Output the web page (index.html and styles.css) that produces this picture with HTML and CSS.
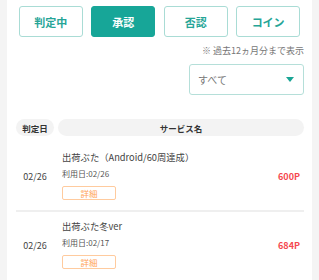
FILE: index.html
```html
<!DOCTYPE html>
<html lang="ja">
<head>
<meta charset="utf-8">
<link rel="stylesheet" href="styles.css">
</head>
<body>
<div class="page">
  <div class="tabs">
    <div class="tab">判定中</div>
    <div class="tab active">承認</div>
    <div class="tab">否認</div>
    <div class="tab">コイン</div>
  </div>
  <div class="note">※ 過去12ヵ月分まで表示</div>
  <div class="filter-row">
    <div class="select">
      <span class="select-text">すべて</span>
      <span class="caret"></span>
    </div>
  </div>
  <div class="thead">
    <div class="th th-date">判定日</div>
    <div class="th th-name">サービス名</div>
  </div>
  <div class="row">
    <div class="date">02/26</div>
    <div class="info">
      <div class="title">出荷ぶた（Android/60周達成）</div>
      <div class="used">利用日:02/26</div>
      <div class="detail">詳細</div>
    </div>
    <div class="points">600P</div>
  </div>
  <div class="row">
    <div class="date">02/26</div>
    <div class="info">
      <div class="title">出荷ぶた冬ver</div>
      <div class="used">利用日:02/17</div>
      <div class="detail">詳細</div>
    </div>
    <div class="points">684P</div>
  </div>
</div>
</body>
</html>
```
FILE: styles.css
```css
html, body {
  margin: 0;
  padding: 0;
  background: #f4f4f4;
  font-family: "Noto Sans CJK JP", "Noto Sans", sans-serif;
}
.page {
  margin: 0 7px;
  width: 305px;
  height: 280px;
  background: #fff;
  padding: 6px 8px 0 9px;
  box-sizing: border-box;
  overflow: hidden;
}
.tabs {
  display: grid;
  grid-template-columns: repeat(4, 1fr);
  column-gap: 8.7px;
  margin: 0 4px 0 3px;
}
.tab {
  height: 31px;
  box-sizing: border-box;
  border: 1px solid #a9dcd5;
  border-radius: 3px;
  display: flex;
  align-items: center;
  justify-content: center;
  color: #26a597;
  font-size: 11px;
  font-weight: 700;
}
.tab.active {
  background: #17a698;
  border-color: #17a698;
  color: #fff;
}
.note {
  margin-top: 8px;
  text-align: right;
  font-size: 9px;
  line-height: 12px;
  color: #777;
}
.filter-row {
  display: flex;
  justify-content: flex-end;
  margin-top: 7px;
}
.select {
  width: 115px;
  height: 31px;
  box-sizing: border-box;
  border: 1px solid #b5dfd9;
  border-radius: 3px;
  display: flex;
  align-items: center;
  justify-content: space-between;
  padding: 0 9px 0 8px;
}
.select-text {
  font-size: 10px;
  color: #777;
}
.caret {
  width: 0;
  height: 0;
  border-left: 4.5px solid transparent;
  border-right: 4.5px solid transparent;
  border-top: 5px solid #1aa595;
}
.thead {
  display: flex;
  gap: 4px;
  margin-top: 24px;
  margin-bottom: 7px;
}
.th {
  height: 17px;
  border-radius: 9px;
  background: #f3f3f3;
  display: flex;
  align-items: center;
  justify-content: center;
  font-size: 8.5px;
  font-weight: 700;
  color: #333;
}
.th-date {
  width: 38px;
}
.th-name {
  flex: 1;
}
.row {
  display: flex;
  align-items: center;
  padding: 7px 4px 10px 0;
}
.row + .row {
  border-top: 2px solid #efefef;
}
.date {
  width: 38px;
  text-align: center;
  font-size: 9px;
  color: #444;
  margin-right: 8px;
  padding-top: 2px;
}
.info {
  flex: 1;
}
.title {
  font-size: 9.3px;
  line-height: 14px;
  color: #444;
}
.used {
  font-size: 8px;
  line-height: 14px;
  color: #555;
  margin-top: 3px;
}
.detail {
  margin-top: 5px;
  width: 54px;
  height: 14px;
  box-sizing: border-box;
  border: 1px solid #ffcb9e;
  border-radius: 2px;
  color: #ffa45a;
  font-size: 8.5px;
  display: flex;
  align-items: center;
  justify-content: center;
}
.points {
  font-size: 9px;
  font-weight: 700;
  color: #f5484f;
  padding-top: 2px;
}
```
